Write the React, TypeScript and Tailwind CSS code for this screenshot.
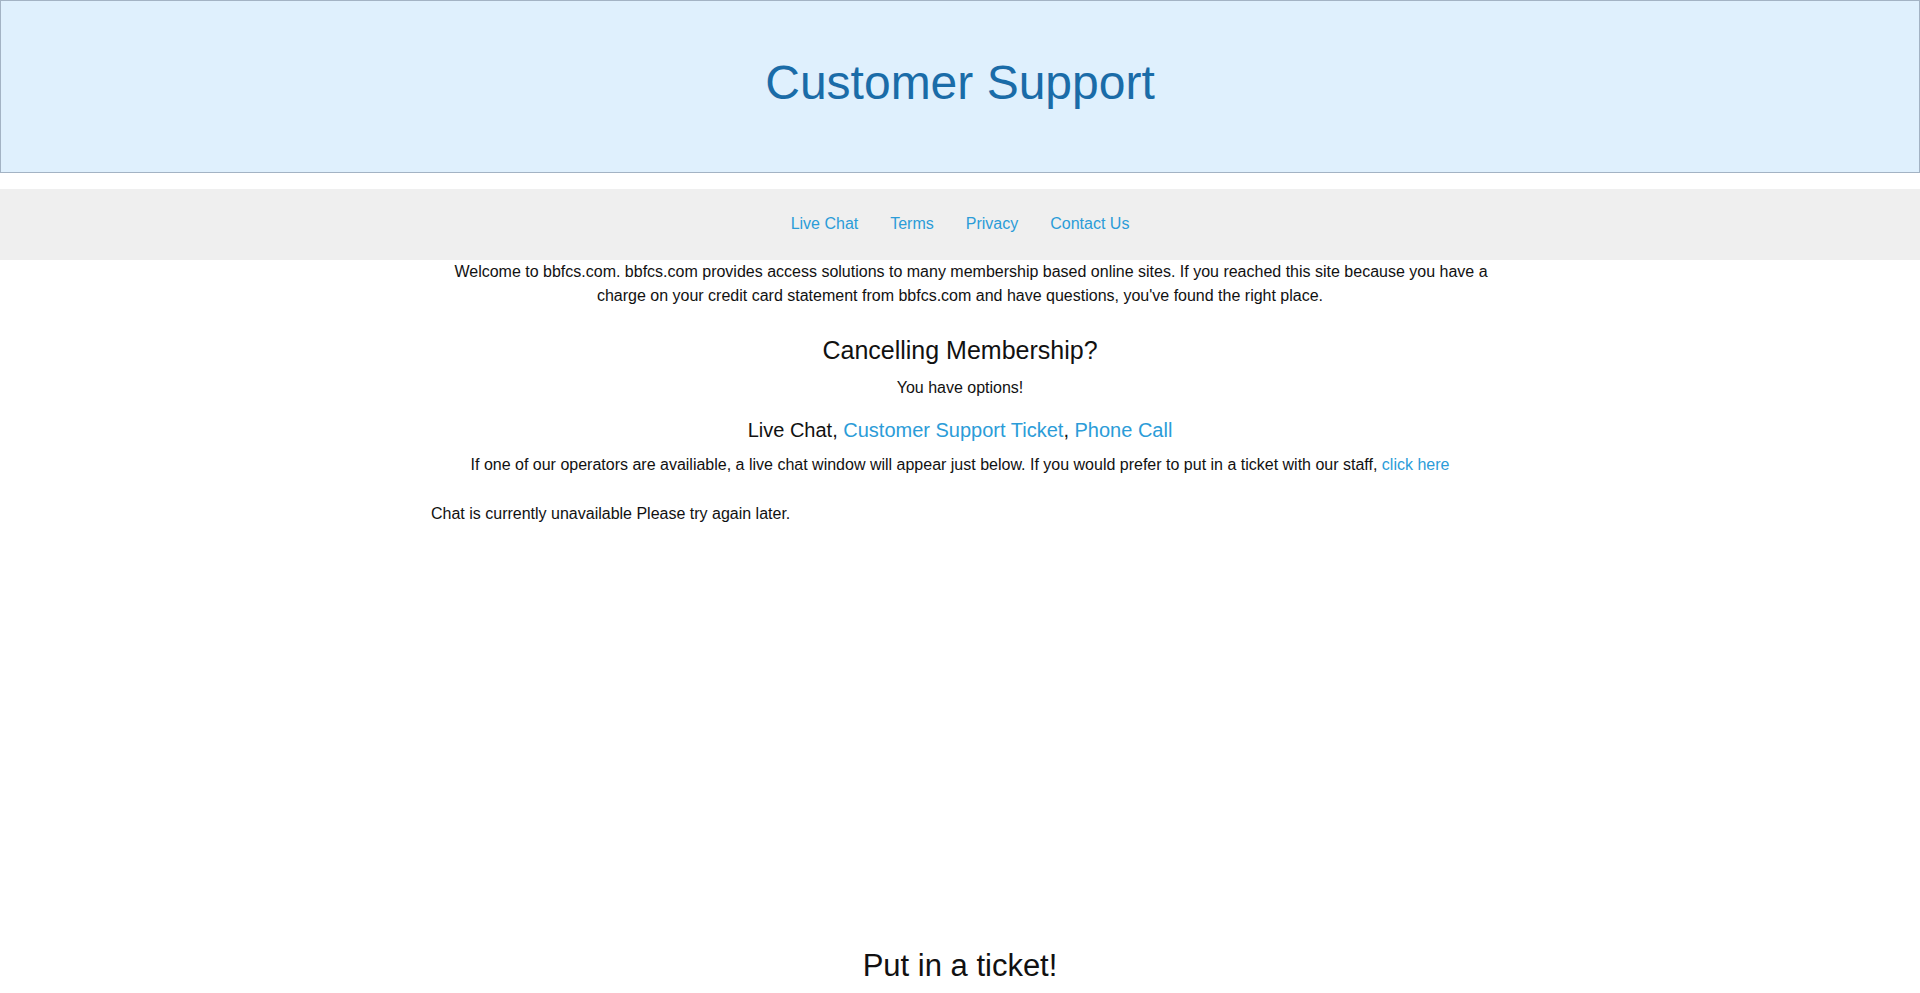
const navLinks = ["Live Chat", "Terms", "Privacy", "Contact Us"];

export default function App() {
  return (
    <div className="min-h-[993px] bg-white font-['Liberation_Sans',Arial,sans-serif] text-[16px] leading-6 text-[#111]">
      <header className="border border-[#a3b3c4] bg-[#dff0fd] pt-[54px] pb-[62px] text-center">
        <h1 className="text-[48px] leading-[55px] text-[#1a6ca8]">Customer Support</h1>
      </header>

      <nav className="mt-[16px] bg-[#efefef] pt-[23px] pb-[24px]">
        <ul className="flex justify-center">
          {navLinks.map((label) => (
            <li key={label}>
              <a href="#" className="px-4 text-[#2b9cd8]">
                {label}
              </a>
            </li>
          ))}
        </ul>
      </nav>

      <main className="mx-auto w-[1058px]">
        <p className="text-center">
          <span className="inline-block w-[22px]" />
          Welcome to bbfcs.com. bbfcs.com provides access solutions to many membership based online sites. If you
          reached this site because you have a charge on your credit card statement from bbfcs.com and have
          questions, you've found the right place.
        </p>

        <h2 className="mt-[24px] text-center text-[25px] leading-9">Cancelling Membership?</h2>
        <p className="mt-[8px] text-center">You have options!</p>

        <h3 className="mt-[15px] text-center text-[20px] leading-[30px]">
          Live Chat,{" "}
          <a href="#" className="text-[#2b9cd8]">
            Customer Support Ticket
          </a>
          ,{" "}
          <a href="#" className="text-[#2b9cd8]">
            Phone Call
          </a>
        </h3>
        <p className="mt-[8px] text-center">
          If one of our operators are availiable, a live chat window will appear just below. If you would prefer to
          put in a ticket with our staff,{" "}
          <a href="#" className="text-[#2b9cd8]">
            click here
          </a>
        </p>

        <p className="mt-[25px]">Chat is currently unavailable Please try again later.</p>

        {/* space reserved for the chat window */}
        <div className="h-[421px]" />

        <h2 className="text-center text-[31px] leading-[37px]">Put in a ticket!</h2>
      </main>
    </div>
  );
}
